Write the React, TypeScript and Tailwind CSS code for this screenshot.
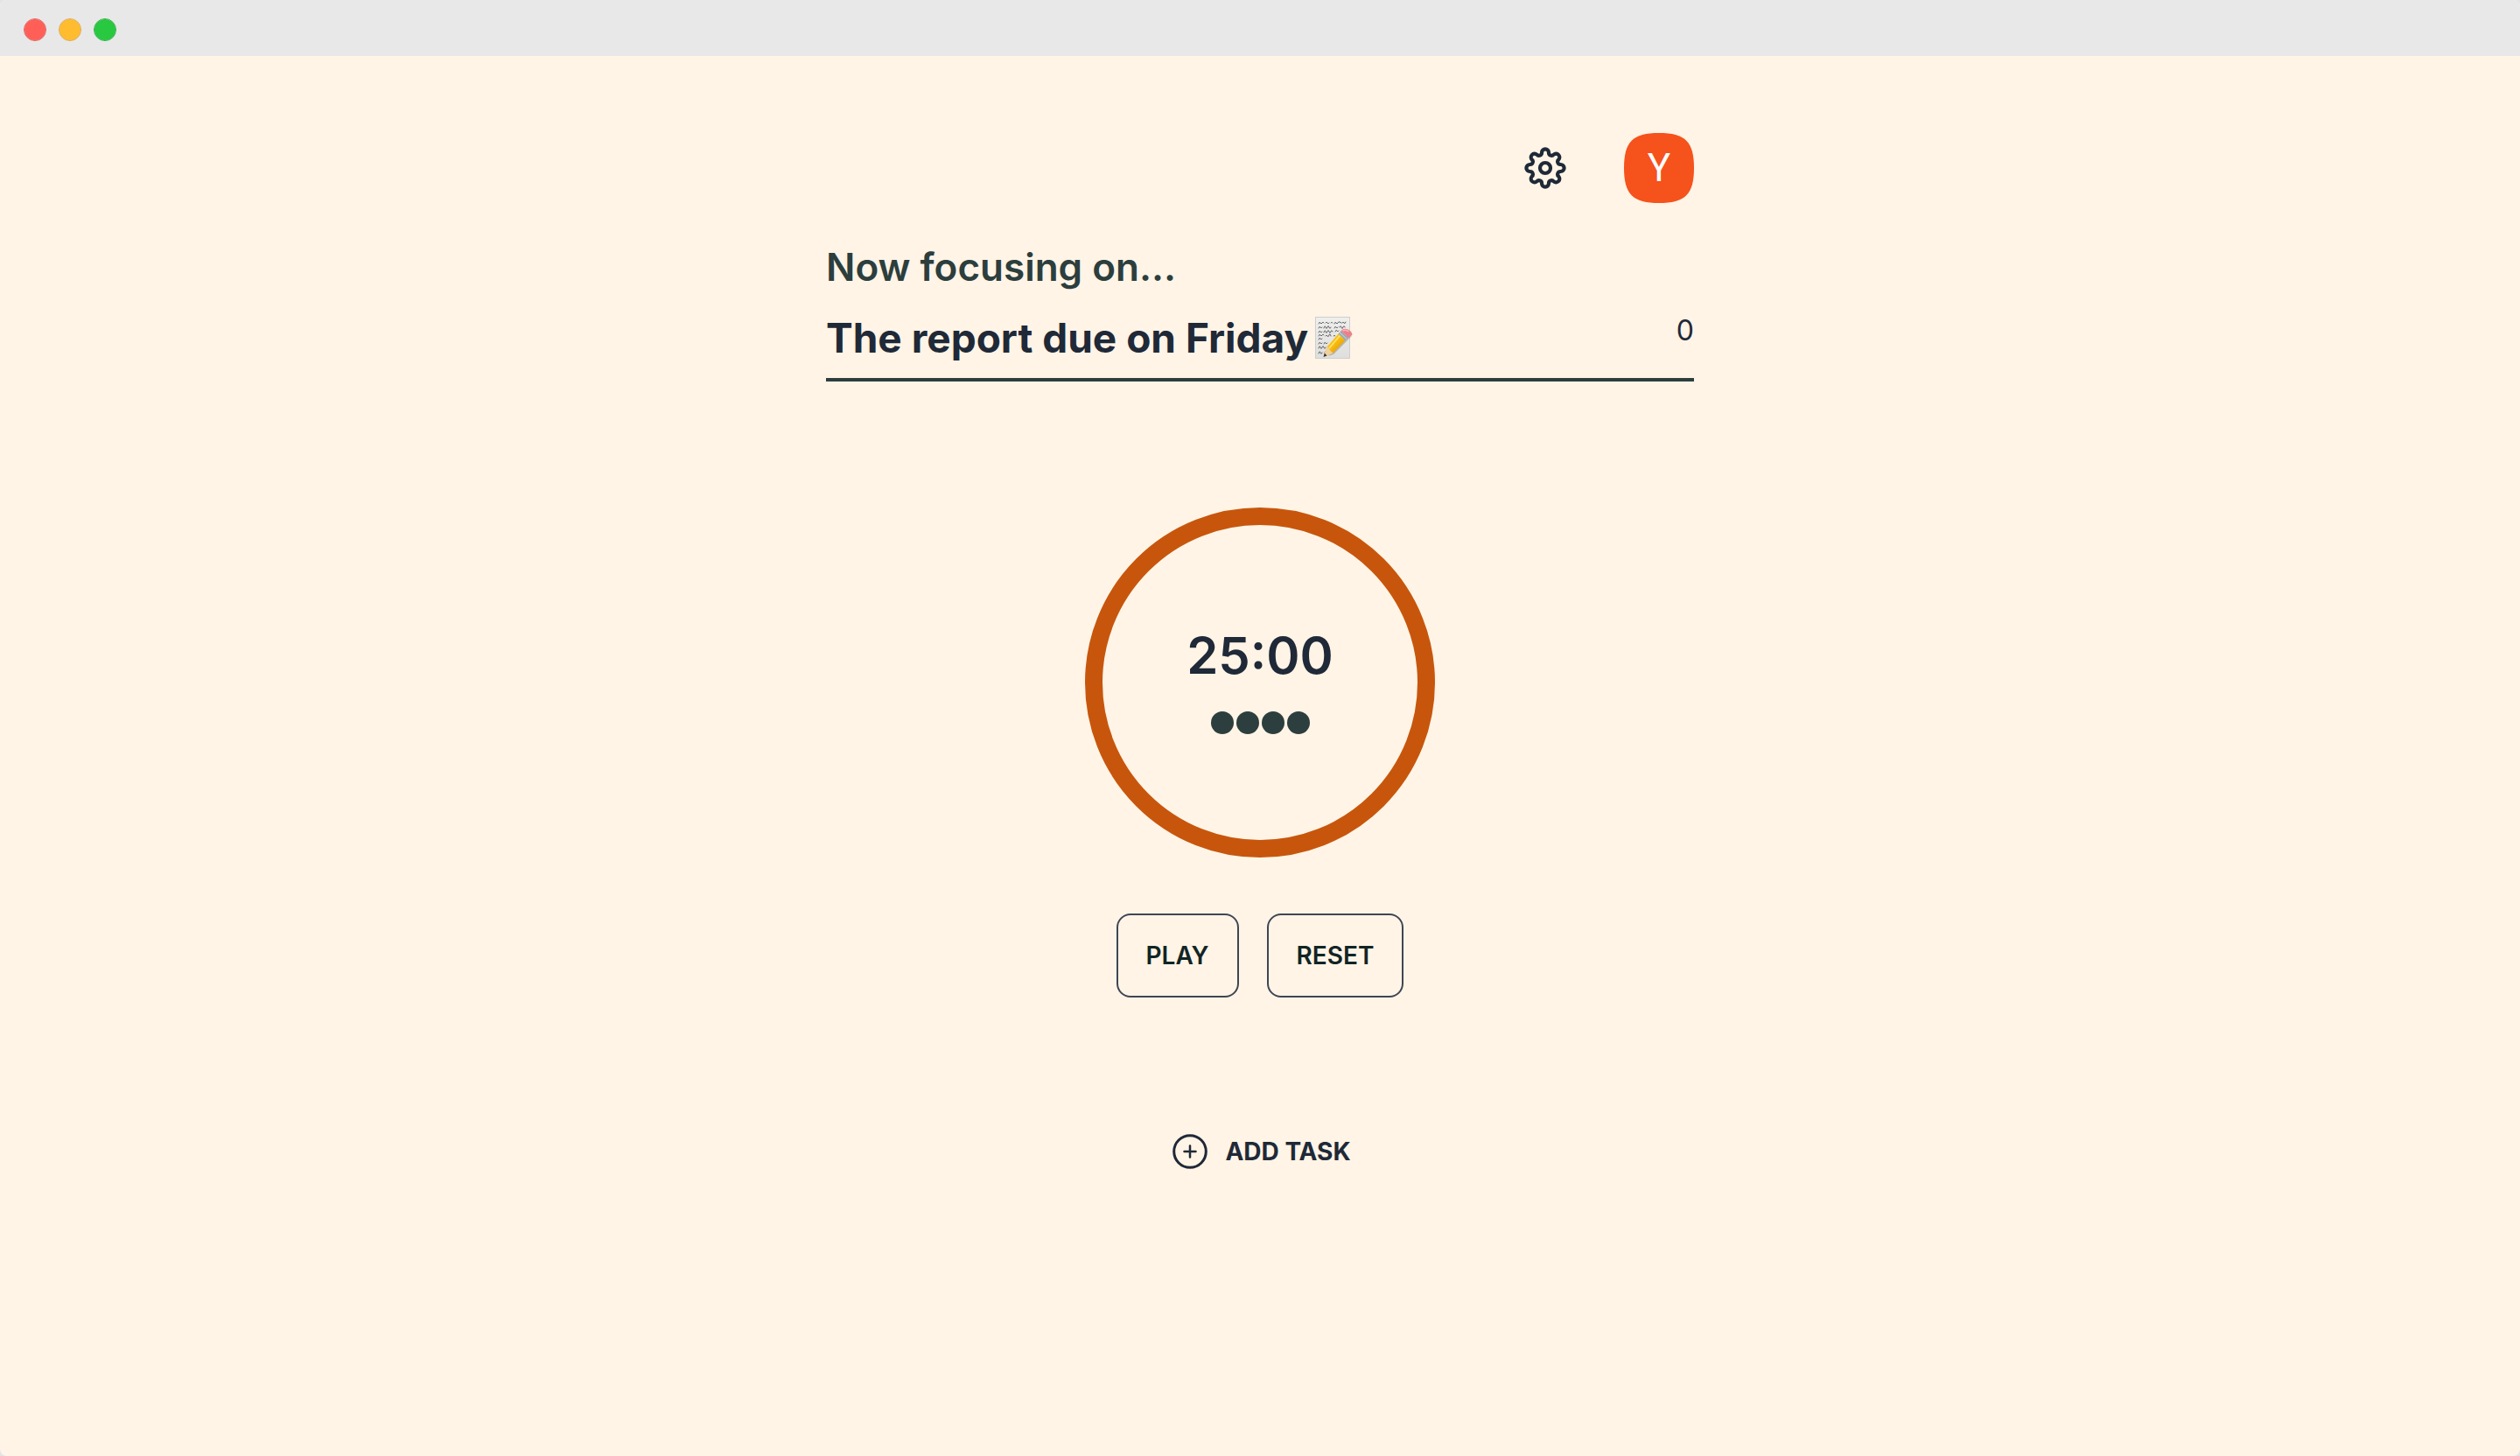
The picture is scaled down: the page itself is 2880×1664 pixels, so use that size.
import React, { useEffect, useState } from "react";

const SESSION_SECONDS = 25 * 60;

function TitleBar() {
  return (
    <div className="flex h-16 items-center gap-4 bg-[#e8e8e8] px-7 pt-1">
      <span className="size-6 rounded-full bg-[#ff5f57] outline outline-[#e2605a]" />
      <span className="size-6 rounded-full bg-[#febc2e] outline outline-[#e2a94a]" />
      <span className="size-6 rounded-full bg-[#28c840] outline outline-[#2eb045]" />
    </div>
  );
}

function GearIcon() {
  return (
    <svg viewBox="-24 -24 48 48" className="size-12" fill="none" stroke="currentColor" strokeWidth="4.2" aria-hidden="true">
      <path d="M17.6 -4A4 4 0 0 1 17.6 4A3.2 3.2 0 0 0 15.27 9.62A4 4 0 0 1 9.62 15.27A3.2 3.2 0 0 0 4 17.6A4 4 0 0 1 -4 17.6A3.2 3.2 0 0 0 -9.62 15.27A4 4 0 0 1 -15.27 9.62A3.2 3.2 0 0 0 -17.6 4A4 4 0 0 1 -17.6 -4A3.2 3.2 0 0 0 -15.27 -9.62A4 4 0 0 1 -9.62 -15.27A3.2 3.2 0 0 0 -4 -17.6A4 4 0 0 1 4 -17.6A3.2 3.2 0 0 0 9.62 -15.27A4 4 0 0 1 15.27 -9.62A3.2 3.2 0 0 0 17.6 -4Z" />
      <circle r="6" />
    </svg>
  );
}

function Avatar() {
  return (
    <button type="button" aria-label="Account" className="relative grid size-20 place-items-center">
      <svg viewBox="0 0 80 80" className="absolute inset-0 size-full" aria-hidden="true">
        <path fill="#f6521c" d="M40 0C70 0 80 10 80 40S70 80 40 80S0 70 0 40S10 0 40 0Z" />
      </svg>
      <span className="relative font-[Roboto,sans-serif] text-[44px] leading-none text-white">Y</span>
    </button>
  );
}

function MemoIcon() {
  return (
    <svg viewBox="0 0 44 48" className="h-12 w-11" role="img" aria-label="Memo">
      <defs>
        <linearGradient id="paper" x1="0" y1="0" x2="0" y2="1">
          <stop offset="0" stopColor="#efefee" />
          <stop offset="1" stopColor="#dededd" />
        </linearGradient>
        <linearGradient id="wood" x1="0" y1="0" x2="1" y2="1">
          <stop offset="0" stopColor="#ffd83c" />
          <stop offset="0.5" stopColor="#f7b90f" />
          <stop offset="1" stopColor="#c98208" />
        </linearGradient>
      </defs>
      <rect x="0.5" y="0.5" width="39" height="47" fill="url(#paper)" stroke="#cfcfcd" />
      <g fill="none" stroke="#666" strokeWidth="1" strokeLinecap="round">
        <path d="M4 8q1-3 2-1t2 0t2 0M12 7q1-2 2 0t2 0M18 7q1-2 2 0M22 8q1-3 2-1t2 0t2-1t2 1M31 7q1-2 2 0t2-1" />
        <path d="M4 13q1-3 2-1t2 0M10 13q1-4 2-1t2 0t2 0t2 0M22 13q1-3 2-1t2 0M28 12q1-3 2 0t2 0t2 0" />
        <path d="M4 18q1-3 2-1t2 0M10 18q1-4 2-1t2 0t2 0t2 0t2 0M23 17q1-3 2-1t2 0" />
        <path d="M4 22q1-3 2-1t2 0t2 0M12 22q1-2 2 0t2-1t2 1M21 22q1-2 2 0" />
        <path d="M4 26q1-3 2-1t2 0M4 31q1-3 2-1t2 0M10 31q1-3 2-1t2 0M4 36q1-4 2-1t2 0t2 0t2 0M4 42q1-4 2-1t2 0M11 41q1-3 1 0" />
      </g>
      <path d="M15 45L21 43L42 22L39 19Z" fill="#000" opacity="0.2" />
      <path d="M26.500 19.500L34.500 27L20.500 41.500L13 44.800L10.500 43L13.500 34.500Z" fill="url(#wood)" />
      <path d="M28.500 21.500L16 36" stroke="#ffe470" strokeWidth="1.500" />
      <path d="M13.500 34.500L16 36L17 38.500L20.500 41.500L12 45L10 43.500Z" fill="#efd0a0" />
      <path d="M10.800 41.500L13.500 44.400L9.500 46Z" fill="#333" />
      <path d="M26.500 19.500L29.500 16L38 24L34.500 27Z" fill="#9ba6b0" />
      <path d="M28 18L36.300 25.500" stroke="#d7dee4" strokeWidth="1" />
      <path d="M29.500 16Q33 12.500 37.500 14.500T42.500 20.500L38 24Z" fill="#ec7f89" />
      <path d="M31.500 16Q35 14 38.500 17" fill="none" stroke="#f9b2b5" strokeWidth="1.500" />
    </svg>
  );
}

function PlusCircleIcon() {
  return (
    <svg viewBox="0 0 40 40" className="size-10" fill="none" stroke="currentColor" strokeLinecap="round" aria-hidden="true">
      <circle cx="20" cy="20" r="18.300" strokeWidth="3" />
      <path d="M20 13.500v13M13.500 20h13" strokeWidth="2.500" />
    </svg>
  );
}

function OutlineButton({ children, onClick }: { children: React.ReactNode; onClick: () => void }) {
  return (
    <button
      type="button"
      onClick={onClick}
      className="h-24 rounded-2xl border-2 border-[#3f4654] px-8 text-[28px] font-semibold text-[#122424] uppercase"
    >
      {children}
    </button>
  );
}

export default function App() {
  const [seconds, setSeconds] = useState(SESSION_SECONDS);
  const [running, setRunning] = useState(false);

  useEffect(() => {
    if (!running) return;
    const id = setInterval(() => setSeconds((s) => Math.max(0, s - 1)), 1000);
    return () => clearInterval(id);
  }, [running]);

  const time = `${String(Math.floor(seconds / 60)).padStart(2, "0")}:${String(seconds % 60).padStart(2, "0")}`;

  return (
    <div className="min-h-screen bg-[#e4e4e6] font-[Inter,sans-serif] text-[#1f2937]">
      <div className="flex min-h-screen flex-col overflow-hidden rounded-lg bg-[#fff4e6]">
        <TitleBar />
        <main className="mx-auto flex w-full max-w-6xl flex-col items-center px-20 pt-22">
          <header className="flex w-full items-center justify-end gap-[66px]">
            <button type="button" aria-label="Settings">
              <GearIcon />
            </button>
            <Avatar />
          </header>

          <section className="mt-10 w-full">
            <h2 className="text-[44px] leading-[66px] font-semibold text-[#2c3e3d]">Now focusing on...</h2>
            <div className="mt-4 flex items-start justify-between border-b-4 border-[#2c3e3d] pb-3.5">
              <h1 className="flex items-center gap-2 text-[46px] leading-16 font-bold">
                The report due on Friday
                <MemoIcon />
              </h1>
              <span className="text-[32px] leading-12">0</span>
            </div>
          </section>

          <section className="mt-36 flex size-100 flex-col items-center justify-center gap-8 rounded-full border-20 border-[#c7560c] pb-1">
            <time className="text-[58px] leading-16 font-semibold">{time}</time>
            <div className="flex gap-[3px]" role="img" aria-label="4 sessions left">
              {[0, 1, 2, 3].map((n) => (
                <span key={n} className="size-[26px] rounded-full bg-[#2c3e3d]" />
              ))}
            </div>
          </section>

          <div className="mt-16 flex gap-8">
            <OutlineButton onClick={() => setRunning(!running)}>{running ? "Pause" : "Play"}</OutlineButton>
            <OutlineButton
              onClick={() => {
                setRunning(false);
                setSeconds(SESSION_SECONDS);
              }}
            >
              Reset
            </OutlineButton>
          </div>

          <button type="button" className="mt-39 flex items-center gap-5 pl-1 text-[28px] leading-10 font-bold uppercase">
            <PlusCircleIcon />
            Add task
          </button>
        </main>
      </div>
    </div>
  );
}
